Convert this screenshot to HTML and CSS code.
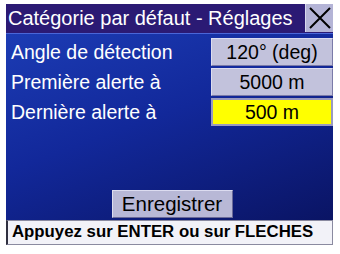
FILE: index.html
```html
<!DOCTYPE html>
<html>
<head>
<meta charset="utf-8">
<link rel="stylesheet" href="styles.css">
</head>
<body>
<div class="screen">
  <div class="titlebar">
    <div class="title">Catégorie par défaut - Réglages</div>
    <div class="close">
      <svg width="24" height="24" viewBox="0 0 24 24"><path d="M2 2 L22 22 M22 2 L2 22" stroke="#000" stroke-width="2" fill="none"/></svg>
    </div>
  </div>
  <div class="panel">
    <div class="row">
      <div class="label">Angle de détection</div>
      <div class="value">120° (deg)</div>
    </div>
    <div class="row">
      <div class="label">Première alerte à</div>
      <div class="value">5000 m</div>
    </div>
    <div class="row">
      <div class="label">Dernière alerte à</div>
      <div class="value selected">500 m</div>
    </div>
    <div class="spacer"></div>
    <div class="actions">
      <div class="save">Enregistrer</div>
    </div>
  </div>
  <div class="status">Appuyez sur ENTER ou sur FLECHES</div>
</div>
</body>
</html>
```
FILE: styles.css
```css
html, body {
  margin: 0;
  padding: 0;
  background: #fff;
}
body {
  font-family: "Liberation Sans", Arial, sans-serif;
}
.screen {
  margin: 4px 7px 0 6px;
  width: 327px;
  display: flex;
  flex-direction: column;
}
.titlebar {
  display: flex;
  height: 29px;
  background: #2b1a74;
}
.title {
  flex: 1;
  color: #fff;
  font-size: 20px;
  line-height: 29px;
  padding-left: 2px;
  white-space: nowrap;
  overflow: hidden;
}
.close {
  width: 27px;
  height: 28px;
  background: #b4b4d6;
  border-left: 1px solid #d8d8ee;
  display: flex;
  align-items: center;
  justify-content: center;
}
.panel {
  height: 187px;
  border-top: 1px solid #4a66d8;
  background: linear-gradient(160deg, #1c3cb4 0%, #12289a 45%, #0a1464 100%);
  display: flex;
  flex-direction: column;
  padding: 3px 0 2px 5px;
  box-sizing: border-box;
}
.row {
  display: flex;
  align-items: center;
  justify-content: space-between;
  height: 30px;
}
.label {
  color: #fff;
  font-size: 19.5px;
}
.value {
  width: 122px;
  height: 28px;
  box-sizing: border-box;
  background: #c2c2dc;
  border: 1px solid #dcdcf0;
  border-bottom-color: #7a7aa8;
  border-right-color: #7a7aa8;
  color: #000;
  font-size: 19.5px;
  display: flex;
  align-items: center;
  justify-content: center;
}
.value.selected {
  background: #ffff00;
  border: 2px solid #9a9ac0;
}
.spacer {
  flex: 1;
}
.actions {
  display: flex;
  justify-content: center;
}
.save {
  width: 121px;
  height: 28px;
  box-sizing: border-box;
  background: #b8b8d6;
  border: 1px solid #dcdcf0;
  border-bottom-color: #6a6a98;
  border-right-color: #6a6a98;
  font-size: 20.5px;
  color: #000;
  display: flex;
  align-items: center;
  justify-content: center;
}
.status {
  height: 25px;
  box-sizing: border-box;
  border: 1px solid #8a8aa0;
  border-left: 2px solid #303040;
  background: #f2f2f8;
  color: #000;
  font-size: 16.8px;
  font-weight: bold;
  line-height: 22px;
  padding-left: 4px;
  white-space: nowrap;
}
```
